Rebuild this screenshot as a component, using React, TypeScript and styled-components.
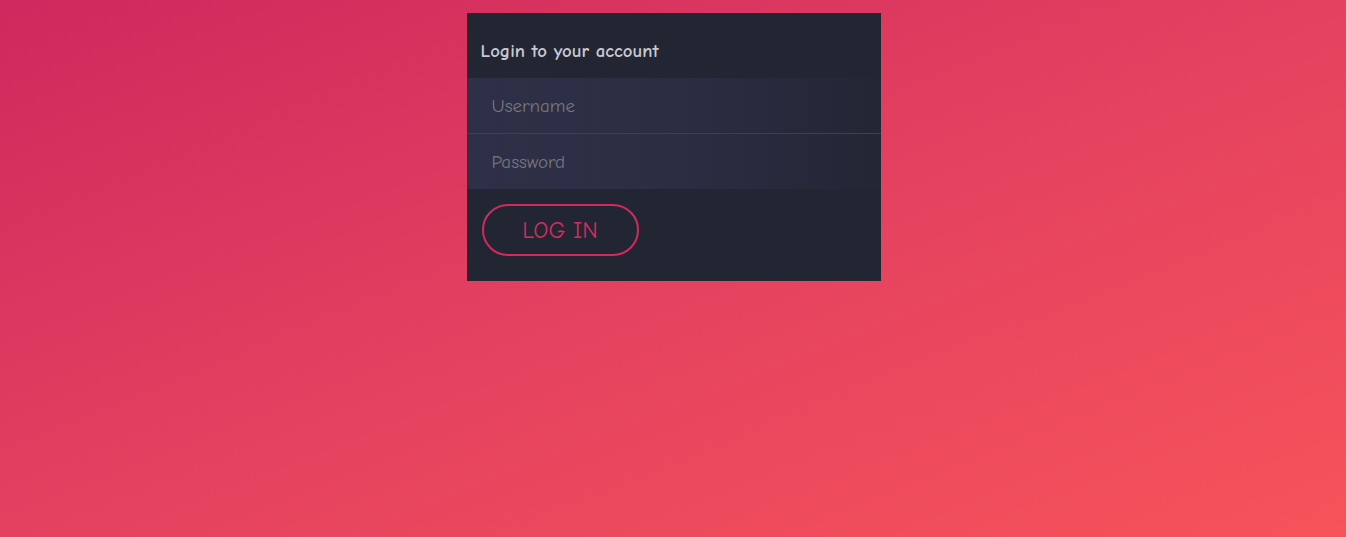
import React from "react";
import styled, { createGlobalStyle } from "styled-components";

const Global = createGlobalStyle`
  html, body { margin: 0; padding: 0; height: 100%; }
  body {
    min-height: 537px;
    background: linear-gradient(to bottom right, #cf285e 0%, #e44160 50%, #f7535a 100%);
    font-family: "Comic Sans MS", "Comic Neue", "Open Sans", sans-serif;
  }
  #root { min-height: 537px; }
`;

const Page = styled.div`
  display: flex;
  justify-content: center;
  padding: 13px 0 0 1px;
`;

const Card = styled.form`
  width: 414px;
  height: 268px;
  box-sizing: border-box;
  background: #222633;
  display: flex;
  flex-direction: column;
`;

const Title = styled.h2`
  margin: 0;
  height: 65px;
  box-sizing: border-box;
  padding: 27px 14px 0;
  font-size: 18.8px;
  line-height: 22px;
  font-weight: 700;
  color: #c9c9cf;
`;

const Field = styled.input<{ $divider?: boolean }>`
  display: block;
  width: 100%;
  height: ${(p) => (p.$divider ? "56px" : "55px")};
  box-sizing: border-box;
  border: none;
  outline: none;
  border-bottom: ${(p) => (p.$divider ? "1px solid #3d4050" : "none")};
  background: linear-gradient(to right, #2e3047 0%, #2b2e43 50%, #232634 100%);
  padding: 0 24px 0 25px;
  font-family: inherit;
  font-size: 19px;
  color: #d0d0d8;
  &::placeholder { color: #76767c; }
`;

const Actions = styled.div`
  padding: 15px 15px 0;
`;

const Button = styled.button`
  width: 157px;
  height: 52px;
  box-sizing: border-box;
  border: 2px solid #d22a5c;
  border-radius: 26px;
  background: transparent;
  color: #d42c5d;
  font-family: inherit;
  font-size: 23.5px;
  padding: 0;
  cursor: pointer;
`;

export default function App() {
  return (
    <>
      <Global />
      <Page>
        <Card onSubmit={(e) => e.preventDefault()}>
          <Title>Login to your account</Title>
          <Field $divider placeholder="Username" />
          <Field type="password" placeholder="Password" />
          <Actions>
            <Button type="submit">LOG IN</Button>
          </Actions>
        </Card>
      </Page>
    </>
  );
}
